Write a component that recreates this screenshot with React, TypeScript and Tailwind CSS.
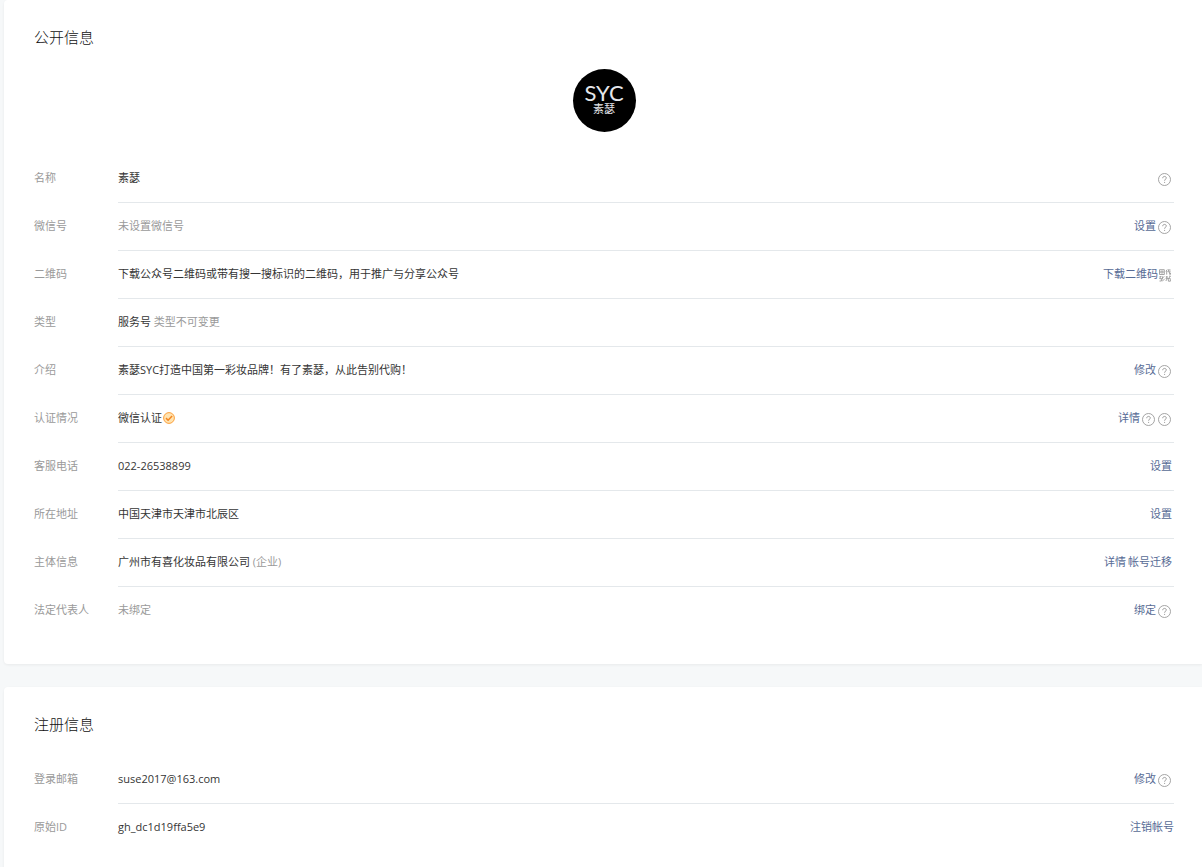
import type { ReactNode } from 'react';

type Row = {
  label: string;
  value: ReactNode;
  actions?: ReactNode;
  flush?: boolean;
};

function HelpIcon() {
  return (
    <button type="button" aria-label="帮助" className="mt-[3px] mr-px ml-0.5 block shrink-0 cursor-pointer">
      <svg width="13" height="13" viewBox="0 0 13 13" fill="none" stroke="#9a9a9a">
        <circle cx="6.5" cy="6.5" r="6" strokeWidth="0.9" />
        <path d="M4.7 5.2c0-1 .7-1.8 1.8-1.8s1.8.7 1.8 1.6c0 1.2-1.7 1.3-1.7 2.7" strokeWidth="1" />
        <path d="M6.1 9.4h1" strokeWidth="1" />
      </svg>
    </button>
  );
}

function QrIcon() {
  return (
    <svg width="12" height="13" viewBox="0 0 12 13" className="mt-0.5 mr-px ml-px shrink-0" fill="none" stroke="#9a9a9a" strokeWidth="0.9">
      <path d="M.5.7h4.8v4.8H.5zM1.8 2.2h2.3v1.7H1.8z" />
      <path d="M8.3.5L6.8 2.4M7.7 2v3.6M9 1h2.6M9.8.6L8.8 3M9 2.8h2.6M10.6 2.8v2.8M11.5 4v1.6" />
      <path d="M.5 7.6h2M3.5 7.4v3M5.2 7.3L4 8.8M1.6 7.6L.6 9.6M.6 9.6h2.2M2.4 9.6v2.4M.5 12h2M3.2 12l2.4-1.8" />
      <path d="M6.8 8h2M7.8 7v2.4M10 7.2h1.6M11.4 7.2L9.4 9.6M6.6 9.6h5M8.2 9.8L6.8 12M9.4 10.2v2h2v-2" />
    </svg>
  );
}

function VerifiedIcon() {
  return (
    <svg width="12" height="12" viewBox="0 0 12 12" className="ml-px shrink-0" fill="none">
      <circle cx="6" cy="6" r="5.4" fill="#ffe3b0" stroke="#fba03c" strokeWidth="1" />
      <path d="M3 6.1l2.1 2.1 4-4.2" stroke="#f5851f" strokeWidth="1.5" />
    </svg>
  );
}

function Avatar() {
  return (
    <div className="mx-auto mb-[23px] flex h-[63px] w-[63px] flex-col items-center rounded-full bg-black pt-3.5 text-white">
      <span className="font-['Lato','Noto_Sans_CJK_SC',sans-serif] text-[22px] leading-5 text-gray-200">SYC</span>
      <span className="text-[11px] leading-3 text-gray-200">素瑟</span>
    </div>
  );
}

function ActionLink({ children }: { children: ReactNode }) {
  return (
    <a href="#" className="text-[#576b95]">
      {children}
    </a>
  );
}

function Muted({ children }: { children: ReactNode }) {
  return <span className="text-[#9a9a9a]">{children}</span>;
}

const publicRows: Row[] = [
  { label: '名称', value: '素瑟', actions: <HelpIcon /> },
  { label: '微信号', value: <Muted>未设置微信号</Muted>, actions: <><ActionLink>设置</ActionLink><HelpIcon /></> },
  {
    label: '二维码',
    value: '下载公众号二维码或带有搜一搜标识的二维码，用于推广与分享公众号',
    actions: <><ActionLink>下载二维码</ActionLink><QrIcon /></>,
  },
  { label: '类型', value: <>服务号 <Muted>类型不可变更</Muted></> },
  {
    label: '介绍',
    value: '素瑟SYC打造中国第一彩妆品牌！有了素瑟，从此告别代购！',
    actions: <><ActionLink>修改</ActionLink><HelpIcon /></>,
  },
  {
    label: '认证情况',
    value: <span className="flex items-center">微信认证<VerifiedIcon /></span>,
    actions: <><ActionLink>详情</ActionLink><HelpIcon /><HelpIcon /></>,
  },
  { label: '客服电话', value: '022-26538899', actions: <ActionLink>设置</ActionLink> },
  { label: '所在地址', value: '中国天津市天津市北辰区', actions: <ActionLink>设置</ActionLink> },
  {
    label: '主体信息',
    value: <>广州市有喜化妆品有限公司 <Muted>(企业)</Muted></>,
    actions: <><ActionLink>详情</ActionLink><span className="ml-0.5"><ActionLink>帐号迁移</ActionLink></span></>,
  },
  { label: '法定代表人', value: <Muted>未绑定</Muted>, actions: <><ActionLink>绑定</ActionLink><HelpIcon /></> },
];

const registerRows: Row[] = [
  { label: '登录邮箱', value: 'suse2017@163.com', actions: <><ActionLink>修改</ActionLink><HelpIcon /></> },
  { label: '原始ID', value: 'gh_dc1d19ffa5e9', actions: <ActionLink>注销帐号</ActionLink>, flush: true },
];

function InfoList({ rows }: { rows: Row[] }) {
  return (
    <dl>
      {rows.map((row, index) => (
        <div key={row.label} className="flex h-12 text-[11px] leading-[46px]">
          <dt className="w-[84px] shrink-0 text-[#9a9a9a]">{row.label}</dt>
          <dd
            className={`flex flex-1 items-start justify-between border-b ${
              index === rows.length - 1 ? 'border-transparent' : 'border-[#e4e8eb]'
            }`}
          >
            <div className="text-[#353535]">{row.value}</div>
            {row.actions && (
              <div className={`flex h-[46px] items-center ${row.flush ? '' : 'pr-0.5'}`}>{row.actions}</div>
            )}
          </dd>
        </div>
      ))}
    </dl>
  );
}

function Card({ title, children }: { title: string; children: ReactNode }) {
  return (
    <section className="rounded-l-sm bg-white pt-[25px] pr-7 pb-[29px] pl-[30px] shadow-[0_1px_3px_rgba(0,0,0,0.06)]">
      <h2 className="mb-5 text-[15px] leading-6 font-light text-[#111111]">{title}</h2>
      {children}
    </section>
  );
}

export default function App() {
  return (
    <main className="flex min-h-screen flex-col gap-[23px] bg-[#f6f8f9] pl-1 font-['Open_Sans','Noto_Sans_CJK_SC',sans-serif]">
      <Card title="公开信息">
        <Avatar />
        <InfoList rows={publicRows} />
      </Card>
      <Card title="注册信息">
        <InfoList rows={registerRows} />
      </Card>
    </main>
  );
}
